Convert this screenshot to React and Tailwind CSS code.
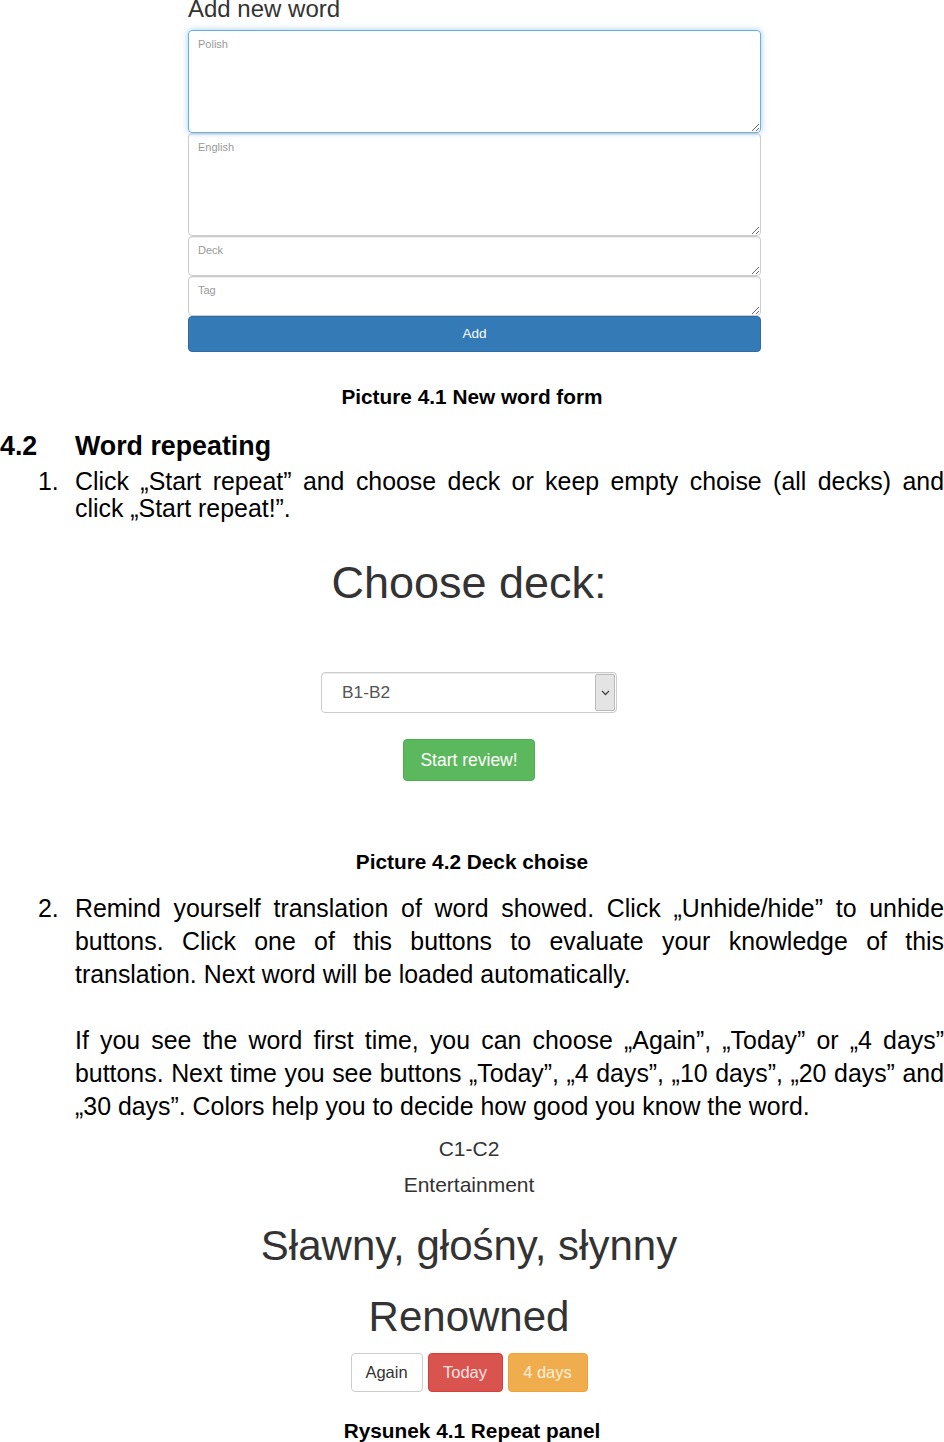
import React from "react";

const Field = ({ label, tall, focused }) => (
  <textarea
    readOnly
    placeholder={label}
    className={
      "block w-full rounded-[4px] border px-[9px] pt-[5px] text-[11px] leading-[16px] text-[#555] placeholder:text-[#999] resize-y outline-none font-['Liberation_Sans',Arial,sans-serif] " +
      (tall ? "h-[103px] " : "h-[40px] ") +
      (focused
        ? "border-[#66afe9] shadow-[0_0_6px_rgba(102,175,233,0.6)]"
        : "border-[#ccc] shadow-[inset_0_1px_1px_rgba(0,0,0,0.075)]")
    }
  />
);

const JLine = ({ children, last }) => (
  <div className={last ? "text-left" : "text-justify [text-align-last:justify]"}>{children}</div>
);

const App = () => {
  return (
    <div className="relative h-[1442px] w-[944px] overflow-hidden bg-white font-['Liberation_Sans',Arial,sans-serif] text-black">
      {/* picture 4.1 */}
      <div className="ml-[188px] w-[573px]">
        <h2 className="mt-[-4px] text-[24px] leading-[26px] text-[#333]">Add new word</h2>
        <div className="mt-[8px]">
          <Field label="Polish" tall focused />
          <Field label="English" tall />
          <Field label="Deck" />
          <Field label="Tag" />
          <button className="block h-[36px] w-full rounded-[4px] border border-[#2e6da4] bg-[#337ab7] text-[13.5px] text-white">
            Add
          </button>
        </div>
      </div>

      <p className="mt-[33px] text-center text-[20.8px] font-bold leading-[24px]">Picture 4.1 New word form</p>

      <h3 className="mt-[21px] flex text-[26.8px] font-bold leading-[32px]">
        <span className="w-[75px]">4.2</span>
        <span>Word repeating</span>
      </h3>

      <div className="mt-[6px] flex text-[24.9px] leading-[27px]">
        <span className="w-[75px] pl-[38px]">1.</span>
        <div className="w-[869px]">
          <JLine>Click „Start repeat” and choose deck or keep empty choise (all decks) and</JLine>
          <JLine last>click „Start repeat!”.</JLine>
        </div>
      </div>

      {/* picture 4.2 */}
      <div className="flex w-[938px] flex-col items-center">
        <div className="mt-[36px] text-[45px] leading-[50px] text-[#333]">Choose deck:</div>
        <div className="mt-[64px] flex h-[41px] w-[296px] items-stretch overflow-hidden rounded-[4px] border border-[#ccc] bg-white shadow-[inset_0_1px_1px_rgba(0,0,0,0.075)]">
          <span className="flex flex-1 items-center pl-[20px] text-[17.3px] text-[#555]">B1-B2</span>
          <span className="my-[1px] mr-[1px] flex w-[20px] items-center justify-center rounded-[2px] border border-[#bbb] bg-[#e4e4e4]">
            <svg width="9" height="6" viewBox="0 0 9 6">
              <path d="M1 1l3.5 3.5L8 1" fill="none" stroke="#444" strokeWidth="1.3" />
            </svg>
          </span>
        </div>
        <button className="mt-[26px] h-[42px] w-[132px] rounded-[4px] border border-[#4cae4c] bg-[#5cb85c] text-[17.5px] text-white">
          Start review!
        </button>
      </div>

      <p className="mt-[69px] text-center text-[20.8px] font-bold leading-[24px]">Picture 4.2 Deck choise</p>

      <div className="mt-[18px] flex text-[24.9px] leading-[33px]">
        <span className="w-[75px] pl-[38px]">2.</span>
        <div className="w-[869px]">
          <JLine>Remind yourself translation of word showed. Click „Unhide/hide” to unhide</JLine>
          <JLine>buttons. Click one of this buttons to evaluate your knowledge of this</JLine>
          <JLine last>translation. Next word will be loaded automatically.</JLine>
          <div className="h-[33px]" />
          <JLine>If you see the word first time, you can choose „Again”, „Today” or „4 days”</JLine>
          <JLine>buttons. Next time you see buttons „Today”, „4 days”, „10 days”, „20 days” and</JLine>
          <JLine last>„30 days”. Colors help you to decide how good you know the word.</JLine>
        </div>
      </div>

      {/* repeat panel */}
      <div className="flex w-[938px] flex-col items-center text-[#333]">
        <div className="mt-[12px] text-[21px] leading-[28px]">C1-C2</div>
        <div className="mt-[8px] text-[21px] leading-[28px]">Entertainment</div>
        <div className="mt-[22px] text-[42px] leading-[50px]">Sławny, głośny, słynny</div>
        <div className="mt-[21px] text-[42px] leading-[50px]">Renowned</div>
        <div className="mt-[11px] flex gap-[5px]">
          <button className="h-[39px] w-[72px] rounded-[4px] border border-[#ccc] bg-white text-[16.5px] text-[#333]">Again</button>
          <button className="h-[39px] w-[75px] rounded-[4px] border border-[#d43f3a] bg-[#d9534f] text-[16.5px] text-[#fbe3e2]">Today</button>
          <button className="h-[39px] w-[80px] rounded-[4px] border border-[#eea236] bg-[#f0ad4e] text-[16.5px] text-[#fdf0dc]">4 days</button>
        </div>
      </div>

      <p className="mt-[27px] text-center text-[20.8px] font-bold leading-[24px]">Rysunek 4.1 Repeat panel</p>
    </div>
  );
};

export default App;
